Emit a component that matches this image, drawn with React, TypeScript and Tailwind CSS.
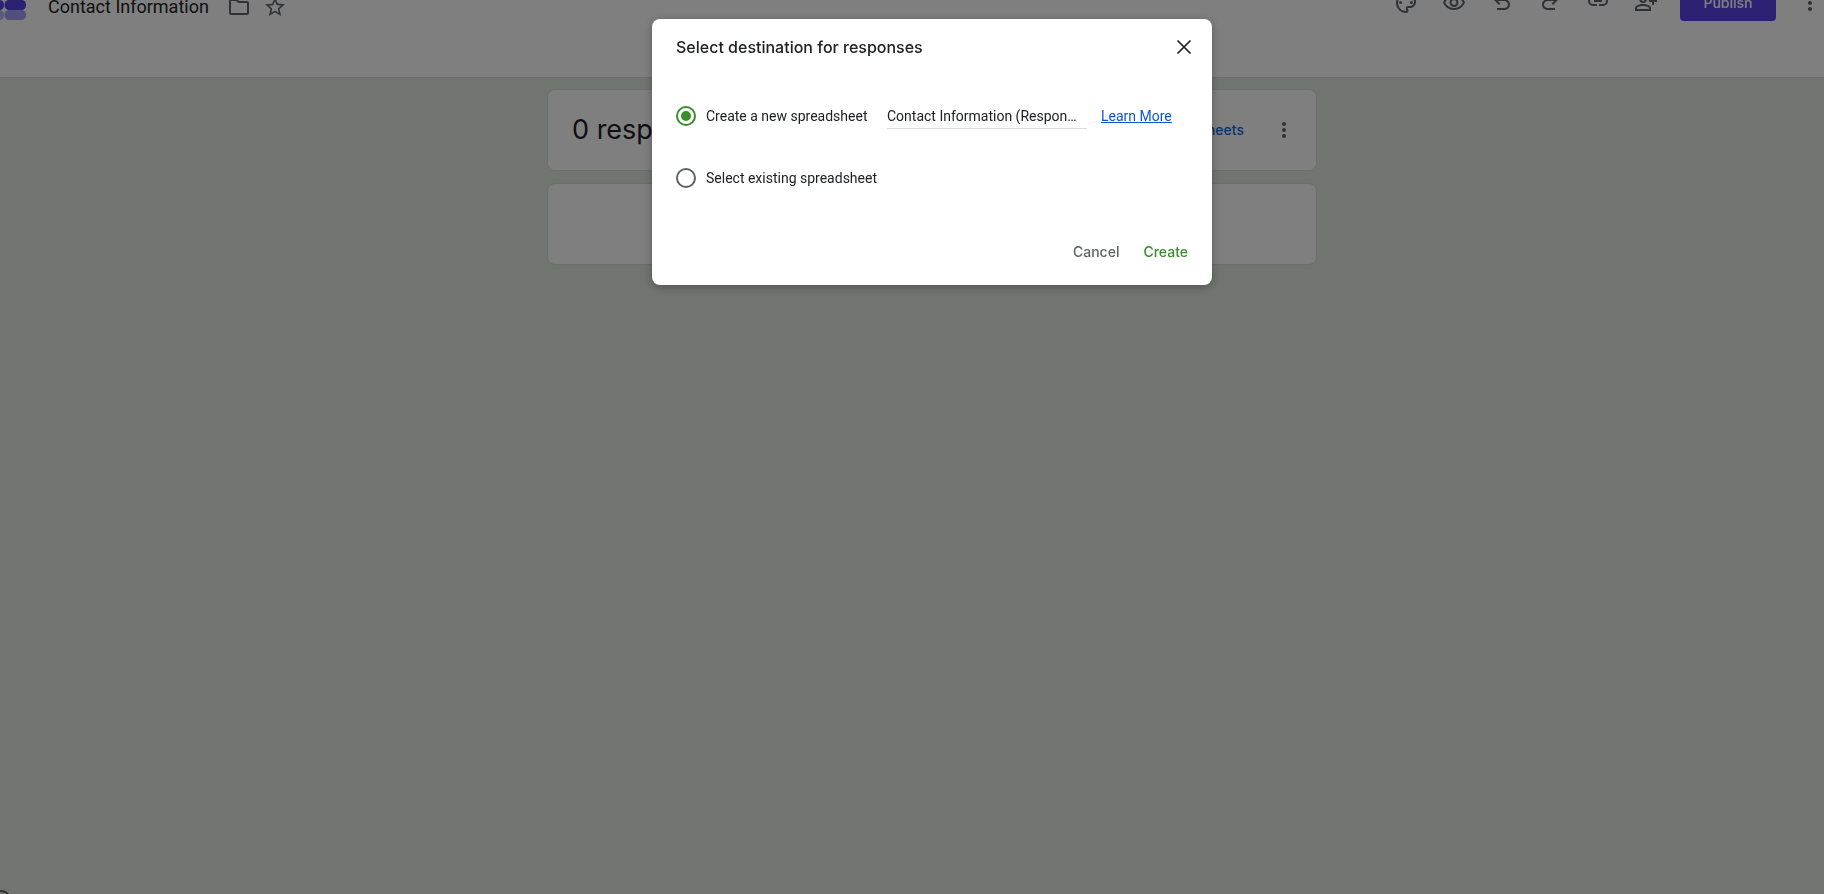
import { useState } from "react";
import {
    MdHelpOutline,
    MdMoreVert,
    MdOutlineFolder,
    MdOutlinePalette,
    MdOutlinePersonAddAlt,
    MdOutlineVisibility,
    MdStarOutline,
} from "react-icons/md";

const iconButton = "flex size-12 shrink-0 items-center justify-center text-[#5f6368]";
const radio =
    "m-0 size-5 shrink-0 appearance-none rounded-full border-2 border-[#5f6368] bg-white p-[3px] bg-clip-content checked:border-[#388e2a] checked:bg-[#388e2a]";

function UndoIcon() {
    return (
        <svg viewBox="0 -960 960 960" className="size-6" fill="currentColor" aria-hidden="true">
            <path d="M280-200v-80h284q63 0 109.5-40T720-420q0-60-46.5-100T564-560H312l104 104-56 56-200-200 200-200 56 56-104 104h252q97 0 166.5 63T800-420q0 94-69.5 157T564-200H280Z" />
        </svg>
    );
}

function RedoIcon() {
    return (
        <svg viewBox="0 -960 960 960" className="size-6" fill="currentColor" aria-hidden="true">
            <path d="M396-200q-97 0-166.5-63T160-420q0-94 69.5-157T396-640h252L544-744l56-56 200 200-200 200-56-56 104-104H396q-63 0-109.5 40T240-420q0 60 46.5 100T396-280h284v80H396Z" />
        </svg>
    );
}

function LinkIcon() {
    return (
        <svg viewBox="0 0 24 24" className="size-6" fill="none" stroke="currentColor" strokeWidth="2" aria-hidden="true">
            <path d="M11 6H7a4 4 0 0 0-4 4a4 4 0 0 0 4 4h4M13 6h4a4 4 0 0 1 4 4a4 4 0 0 1-4 4h-4M8 10h8" />
        </svg>
    );
}

function CloseIcon() {
    return (
        <svg viewBox="0 0 24 24" className="size-6" fill="none" stroke="currentColor" strokeWidth="1.7" aria-hidden="true">
            <path d="M5.5 5.5l13 13M18.5 5.5l-13 13" />
        </svg>
    );
}

function FormsLogo() {
    return (
        <svg viewBox="0 0 32 40" className="h-10 w-8 shrink-0" aria-hidden="true">
            <rect x="-17" y="13" width="21" height="10" rx="4.5" fill="#5840e4" />
            <rect x="-17" y="23" width="21" height="10" rx="4.5" fill="#b0b4f4" />
            <rect x="4.5" y="13" width="21.5" height="10" rx="4.5" fill="#5840e4" />
            <rect x="4.5" y="23" width="21.5" height="10" rx="4.5" fill="#a49cfa" />
        </svg>
    );
}

function Header() {
    return (
        <header className="h-[78px] overflow-hidden border-b border-[#dadce0] bg-white">
            <div className="-mt-[29px] -mr-[10px] flex h-16 items-center justify-between">
                <div className="flex items-center pt-2 text-[#5f6368]">
                    <FormsLogo />
                    <h1 className="ml-4 text-lg text-[#202124]">Contact Information</h1>
                    <button type="button" aria-label="Move to folder" className="ml-[18px] p-0">
                        <MdOutlineFolder className="size-6" />
                    </button>
                    <button type="button" aria-label="Star" className="ml-3 p-0">
                        <MdStarOutline className="size-6" />
                    </button>
                </div>
                <div className="flex items-center">
                    <button type="button" aria-label="Customize theme" className={iconButton}>
                        <MdOutlinePalette className="size-6" />
                    </button>
                    <button type="button" aria-label="Preview" className={iconButton}>
                        <MdOutlineVisibility className="size-6" />
                    </button>
                    <button type="button" aria-label="Undo" className={iconButton}>
                        <UndoIcon />
                    </button>
                    <button type="button" aria-label="Redo" className={iconButton}>
                        <RedoIcon />
                    </button>
                    <button type="button" aria-label="Copy responder link" className={iconButton}>
                        <LinkIcon />
                    </button>
                    <button type="button" aria-label="Share" className={iconButton}>
                        <MdOutlinePersonAddAlt className="size-6" />
                    </button>
                    <button
                        type="button"
                        className="ml-[10px] h-9 w-24 rounded bg-[#5840e4] font-['Inter',sans-serif] text-sm font-medium text-white"
                    >
                        Publish
                    </button>
                    <button type="button" aria-label="More options" className={`${iconButton} ml-[10px]`}>
                        <MdMoreVert className="size-6" />
                    </button>
                </div>
            </div>
        </header>
    );
}

function Responses() {
    return (
        <main className="flex flex-col items-center gap-3 pt-[11px] pl-10">
            <section className="flex h-[82px] w-full max-w-[770px] items-center rounded-lg border border-[#dadce0] bg-white pr-2 pl-6">
                <h2 className="flex-1 font-['Inter',sans-serif] text-[27px] text-[#202124]">0 responses</h2>
                <a href="#" className="mr-4 font-['Inter',sans-serif] text-sm font-medium text-[#0b6bd0]">
                    Link to Sheets
                </a>
                <button type="button" aria-label="More response options" className={iconButton}>
                    <MdMoreVert className="size-6" />
                </button>
            </section>
            <section className="h-[82px] w-full max-w-[770px] rounded-lg border border-[#dadce0] bg-white" />
        </main>
    );
}

function DestinationDialog() {
    const [target, setTarget] = useState("new");
    const [name, setName] = useState("Contact Information (Responses)");

    return (
        <div className="fixed inset-0 flex items-start justify-center bg-black/50 pt-[19px] pl-10">
            <div
                role="dialog"
                aria-modal="true"
                aria-labelledby="dialog-title"
                className="w-full max-w-[560px] rounded-lg bg-white px-6 pt-4 pb-[15px] text-[#202124] shadow-[0_2px_10px_rgba(0,0,0,0.3)]"
            >
                <div className="flex h-6 items-center justify-between">
                    <h2 id="dialog-title" className="font-['Inter',sans-serif] text-base font-medium">
                        Select destination for responses
                    </h2>
                    <button type="button" aria-label="Close" className="-mr-2">
                        <CloseIcon />
                    </button>
                </div>
                <form onSubmit={(e) => e.preventDefault()}>
                    <div className="mt-[33px] flex h-12 items-center text-sm">
                        <label className="flex w-[211px] items-center gap-[10px]">
                            <input
                                type="radio"
                                name="target"
                                className={radio}
                                checked={target === "new"}
                                onChange={() => setTarget("new")}
                            />
                            Create a new spreadsheet
                        </label>
                        <input
                            type="text"
                            aria-label="Spreadsheet name"
                            value={name}
                            onChange={(e) => setName(e.target.value)}
                            className="h-[26px] w-[200px] border-b border-[#dadce0] pr-2 text-ellipsis outline-none"
                        />
                        <a href="#" className="ml-[14px] text-[#0b57d0] underline">
                            Learn More
                        </a>
                    </div>
                    <div className="mt-[14px] flex h-12 items-center text-sm">
                        <label className="flex items-center gap-[10px]">
                            <input
                                type="radio"
                                name="target"
                                className={radio}
                                checked={target === "existing"}
                                onChange={() => setTarget("existing")}
                            />
                            Select existing spreadsheet
                        </label>
                    </div>
                    <div className="mt-8 flex h-9 items-center justify-end gap-6 font-['Inter',sans-serif] text-sm font-medium">
                        <button type="button" className="text-[#5f6368]">
                            Cancel
                        </button>
                        <button type="submit" className="text-[#388e2a]">
                            Create
                        </button>
                    </div>
                </form>
            </div>
        </div>
    );
}

export default function App() {
    return (
        <div className="min-h-screen bg-[#e2ebe1] font-['Roboto',sans-serif]">
            <Header />
            <Responses />
            <button type="button" aria-label="Help" className="fixed -bottom-[18px] -left-[11px] text-[#5f6368]">
                <MdHelpOutline className="size-6" />
            </button>
            <DestinationDialog />
        </div>
    );
}
